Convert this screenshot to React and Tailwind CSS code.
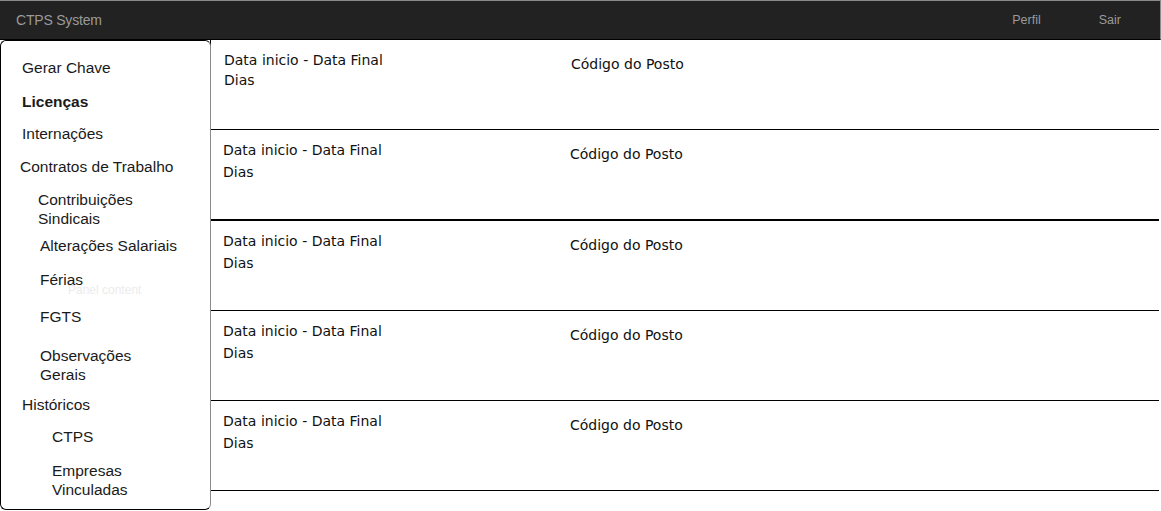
import React from "react";

const rowFont = { fontFamily: '"DejaVu Sans", Verdana, sans-serif' };

function Row({ first, thick }) {
  return (
    <div
      className={`flex shrink-0 border-black ${thick ? "h-[91px] border-b-2" : "h-[90px] border-b"} ${first ? "border-l border-l-black -ml-px" : ""}`}
    >
      <div
        className={`w-[359px] shrink-0 text-[14px] text-[#111] ${first ? "pl-[13px] pt-[10px] leading-[20px]" : "pl-[12px] pt-[9px] leading-[22px]"}`}
      >
        <div>Data inicio - Data Final</div>
        <div>Dias</div>
      </div>
      <div className={`pt-[14px] text-[14px] leading-[20px] text-[#111] ${first ? "pl-[1px]" : ""}`}>
        Código do Posto
      </div>
    </div>
  );
}

export default function App() {
  return (
    <div
      className="w-[1161px] h-[511px] bg-white overflow-hidden flex flex-col"
      style={{ fontFamily: '"Liberation Sans", Arial, sans-serif' }}
    >
      <header className="h-[40px] shrink-0 bg-[#222222] border-t border-t-[#8a8a8a] border-r border-r-[#8a8a8a] border-b border-b-black flex items-center text-[#9a9a9a]">
        <span className="pl-[16px] text-[14px] tracking-[-0.2px]">CTPS System</span>
        <span className="ml-auto text-[12.5px]">Perfil</span>
        <span className="ml-[58px] mr-[39px] text-[12.5px]">Sair</span>
      </header>
      <div className="flex flex-1 min-h-0">
        <aside className="relative w-[211px] shrink-0 border border-black border-r-[#8a8a8a] rounded-[6px] text-[15.5px] leading-[19px] text-[#1a1a1a] h-[470px]">
          <div className="absolute left-[67px] top-[240px] text-[12px] text-[#ececec] pointer-events-none">
            Panel content
          </div>
          <div className="pl-[21px] pt-[17px]">Gerar Chave</div>
          <div className="pl-[21px] mt-[15px] font-bold">Licenças</div>
          <div className="pl-[21px] mt-[13px]">Internações</div>
          <div className="pl-[19px] mt-[14px]">Contratos de Trabalho</div>
          <div className="pl-[37px] mt-[14px]">
            Contribuições
            <br />
            Sindicais
          </div>
          <div className="pl-[39px] mt-[8px]">Alterações Salariais</div>
          <div className="pl-[39px] mt-[15px]">Férias</div>
          <div className="pl-[39px] mt-[18px]">FGTS</div>
          <div className="pl-[39px] mt-[20px]">
            Observações
            <br />
            Gerais
          </div>
          <div className="pl-[21px] mt-[11px]">Históricos</div>
          <div className="pl-[51px] mt-[13px]">CTPS</div>
          <div className="pl-[51px] mt-[15px]">
            Empresas
            <br />
            Vinculadas
          </div>
        </aside>
        <main className="flex-1 flex flex-col mr-[2px]" style={rowFont}>
          <Row first />
          <Row thick />
          <Row />
          <Row />
          <Row />
        </main>
      </div>
    </div>
  );
}
